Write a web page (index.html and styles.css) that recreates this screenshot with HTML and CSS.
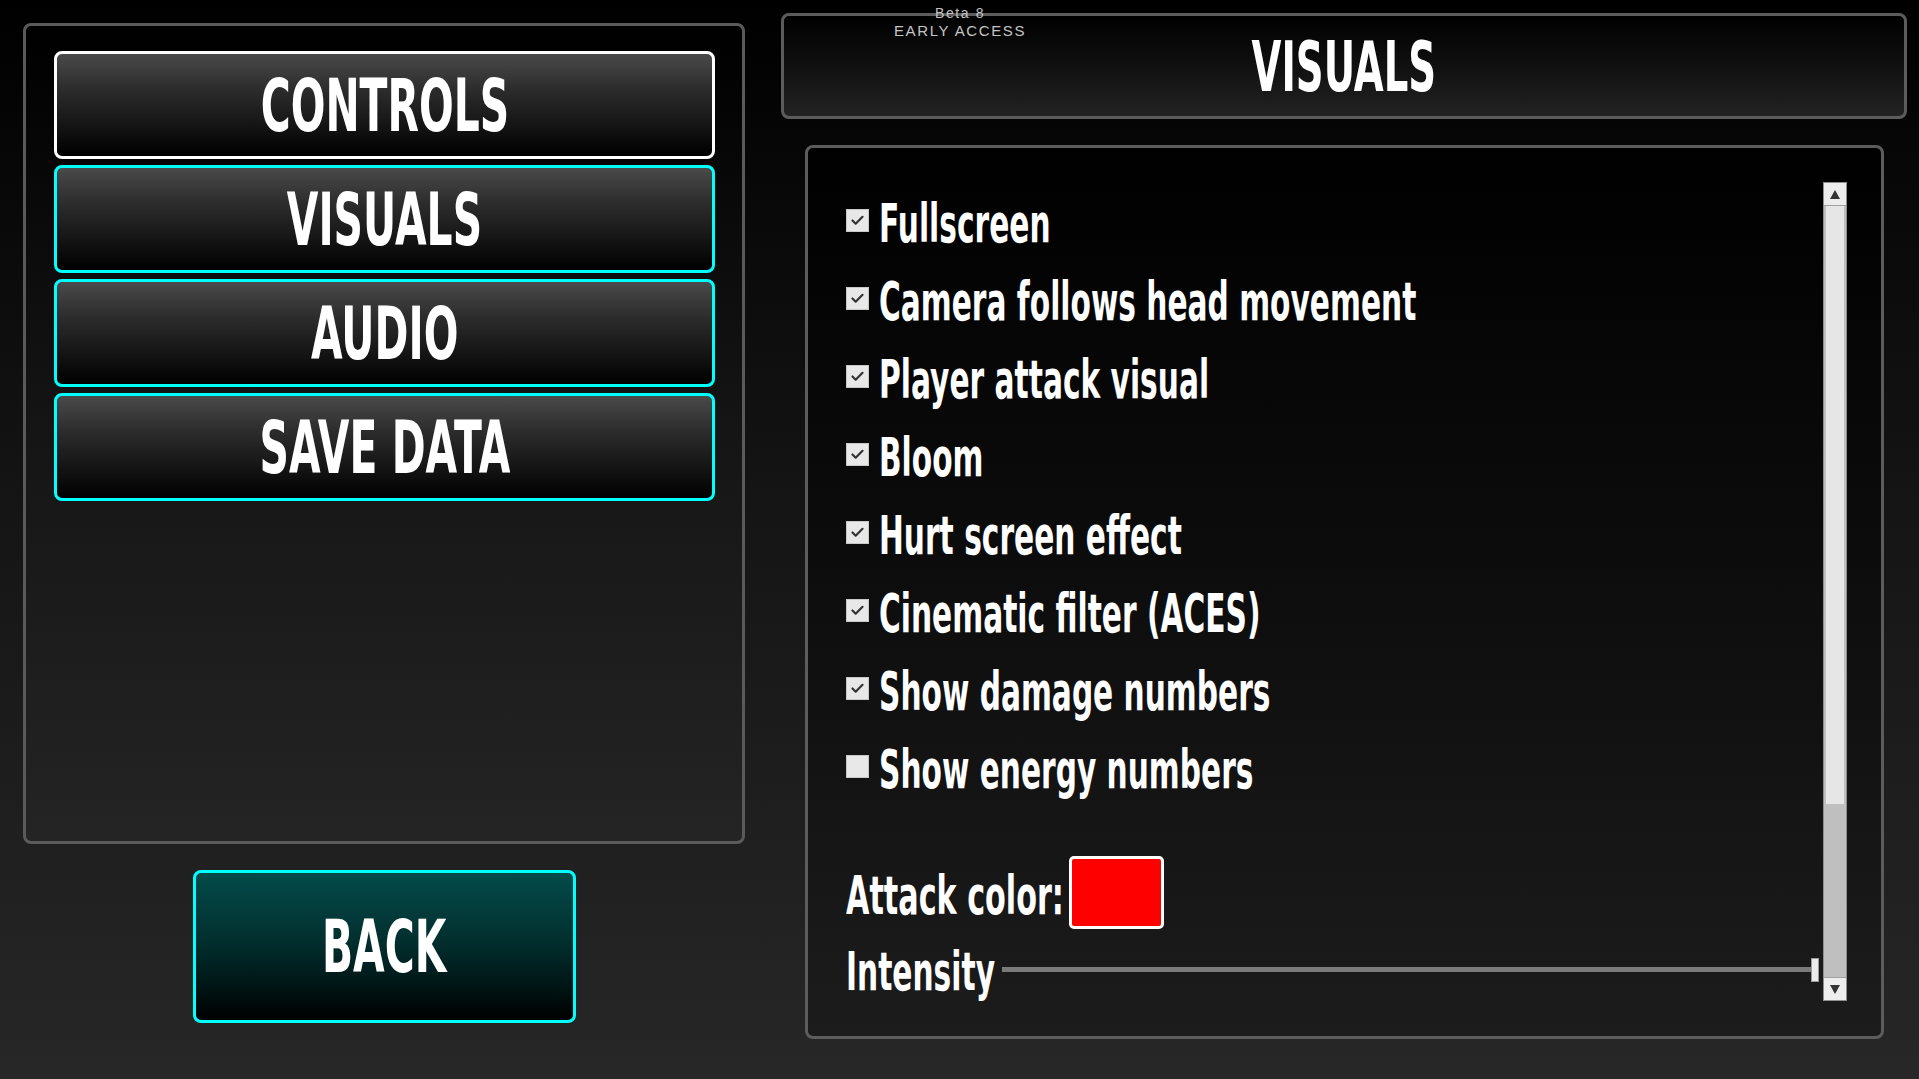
FILE: index.html
```html
<!DOCTYPE html>
<html lang="en">
<head>
    <meta charset="UTF-8">
    <meta name="viewport" content="width=device-width, initial-scale=1.0">
    <title>Settings - Visuals</title>
    <link rel="stylesheet" href="styles.css">
</head>
<body>
    <!-- 左侧菜单 -->
    <div class="side">
        <div class="menu-panel">
            <button class="menu-btn selected"><span class="squish">CONTROLS</span></button>
            <button class="menu-btn"><span class="squish">VISUALS</span></button>
            <button class="menu-btn"><span class="squish">AUDIO</span></button>
            <button class="menu-btn"><span class="squish">SAVE DATA</span></button>
        </div>
        <button class="back-btn"><span class="squish">BACK</span></button>
    </div>

    <!-- 右侧设置 -->
    <div class="main">
        <div class="beta">
            <div class="beta-ver">Beta 8</div>
            <div class="beta-label">EARLY ACCESS</div>
        </div>

        <div class="title-bar">
            <h1 class="squish">VISUALS</h1>
        </div>

        <div class="settings-panel">
            <div class="settings">
                <div class="row">
                    <span class="check on"><svg viewBox="0 0 23 23"><polyline points="6,11.5 9.5,15 17,7.5"/></svg></span>
                    <span class="label">Fullscreen</span>
                </div>
                <div class="row">
                    <span class="check on"><svg viewBox="0 0 23 23"><polyline points="6,11.5 9.5,15 17,7.5"/></svg></span>
                    <span class="label">Camera follows head movement</span>
                </div>
                <div class="row">
                    <span class="check on"><svg viewBox="0 0 23 23"><polyline points="6,11.5 9.5,15 17,7.5"/></svg></span>
                    <span class="label">Player attack visual</span>
                </div>
                <div class="row">
                    <span class="check on"><svg viewBox="0 0 23 23"><polyline points="6,11.5 9.5,15 17,7.5"/></svg></span>
                    <span class="label">Bloom</span>
                </div>
                <div class="row">
                    <span class="check on"><svg viewBox="0 0 23 23"><polyline points="6,11.5 9.5,15 17,7.5"/></svg></span>
                    <span class="label">Hurt screen effect</span>
                </div>
                <div class="row">
                    <span class="check on"><svg viewBox="0 0 23 23"><polyline points="6,11.5 9.5,15 17,7.5"/></svg></span>
                    <span class="label">Cinematic filter (ACES)</span>
                </div>
                <div class="row">
                    <span class="check on"><svg viewBox="0 0 23 23"><polyline points="6,11.5 9.5,15 17,7.5"/></svg></span>
                    <span class="label">Show damage numbers</span>
                </div>
                <div class="row">
                    <span class="check"></span>
                    <span class="label">Show energy numbers</span>
                </div>

                <div class="color-row">
                    <div class="color-label"><span class="label">Attack color:</span></div>
                    <div class="swatch"></div>
                </div>

                <div class="slider-row">
                    <div class="slider-label"><span class="label">Intensity</span></div>
                    <div class="slider">
                        <div class="track"></div>
                        <div class="handle"></div>
                    </div>
                </div>
            </div>

            <div class="scrollbar">
                <div class="sb-btn"><span class="arrow-up"></span></div>
                <div class="sb-track">
                    <div class="sb-thumb"></div>
                </div>
                <div class="sb-btn"><span class="arrow-down"></span></div>
            </div>
        </div>
    </div>
</body>
</html>
```

FILE: styles.css
```css
* {
    margin: 0;
    padding: 0;
    box-sizing: border-box;
}

html, body {
    width: 1919px;
    height: 1079px;
    overflow: hidden;
}

body {
    background: linear-gradient(180deg, #000 0%, #141414 45%, #272727 100%);
    font-family: "DejaVu Sans", "Liberation Sans", sans-serif;
    color: #fff;
    display: flex;
    align-items: flex-start;
    gap: 36px;
    padding: 13px 0 0 23px;
}

/* 压窄的粗体字 */
.squish {
    display: inline-block;
    font-weight: bold;
    transform: scaleX(0.56);
    white-space: nowrap;
}

/* 左侧 */
.side {
    width: 722px;
    flex: none;
    padding-top: 10px;
    display: flex;
    flex-direction: column;
    align-items: center;
}

.menu-panel {
    width: 100%;
    height: 821px;
    border: 3px solid #5a5a5a;
    border-radius: 8px;
    background: linear-gradient(180deg, #000 0%, #151515 50%, #242424 100%);
    padding: 25px 27px 0 28px;
    display: flex;
    flex-direction: column;
    gap: 6px;
}

.menu-btn {
    height: 108px;
    width: 100%;
    border: 3px solid #00ffff;
    border-radius: 8px;
    background: linear-gradient(180deg, #4a4a4a 0%, #2c2c2c 35%, #181818 65%, #000 100%);
    color: #fff;
    display: flex;
    justify-content: center;
    align-items: center;
    font-family: "DejaVu Sans", sans-serif;
    font-size: 73px;
    line-height: 1;
    cursor: pointer;
}

.menu-btn.selected {
    border-color: #fff;
}

.back-btn {
    margin-top: 26px;
    width: 383px;
    height: 153px;
    border: 3px solid #00ffff;
    border-radius: 8px;
    background: linear-gradient(180deg, #044b4b 0%, #02302f 45%, #001717 75%, #000 100%);
    color: #fff;
    display: flex;
    justify-content: center;
    align-items: center;
    font-family: "DejaVu Sans", sans-serif;
    font-size: 73px;
    line-height: 1;
    cursor: pointer;
}

/* 右侧 */
.main {
    width: 1126px;
    flex: none;
    display: flex;
    flex-direction: column;
    align-items: center;
    position: relative;
}

.beta {
    position: absolute;
    top: -8px;
    left: 79px;
    width: 200px;
    text-align: center;
    font-family: "Liberation Sans", Arial, sans-serif;
    color: #c4c4c4;
    letter-spacing: 1.6px;
    z-index: 2;
}

.beta-ver {
    font-size: 14px;
    line-height: 16px;
}

.beta-label {
    font-size: 15px;
    line-height: 17px;
    margin-top: 1px;
}

.title-bar {
    width: 100%;
    height: 106px;
    border: 3px solid #5c5c5c;
    border-radius: 8px;
    background: linear-gradient(180deg, #000 0%, #101010 50%, #232323 100%);
    display: flex;
    justify-content: center;
    align-items: center;
}

.title-bar h1 {
    font-size: 69px;
    line-height: 1;
    margin-top: 2px;
}

.settings-panel {
    margin-top: 26px;
    width: 1079px;
    height: 894px;
    border: 3px solid #5c5c5c;
    border-radius: 8px;
    background: linear-gradient(180deg, #000 0%, #0c0c0c 45%, #1c1c1c 100%);
    padding: 34px 34px 35px 38px;
    display: flex;
    gap: 4px;
}

.settings {
    flex: 1;
    min-width: 0;
    padding-top: 3px;
    display: flex;
    flex-direction: column;
}

.row {
    display: flex;
    align-items: flex-start;
    height: 78px;
}

.check {
    flex: none;
    width: 23px;
    height: 23px;
    margin-top: 24px;
    margin-right: 10px;
    background: #e8e8e8;
    border: 1px solid #c8c8c8;
}

.check svg {
    display: block;
    width: 100%;
    height: 100%;
}

.check polyline {
    fill: none;
    stroke: #333;
    stroke-width: 2.4;
    stroke-linecap: round;
    stroke-linejoin: round;
}

.label {
    display: inline-block;
    font-size: 53px;
    line-height: 78px;
    font-weight: bold;
    white-space: nowrap;
    transform: scaleX(0.56);
    transform-origin: left center;
}

.color-row {
    margin-top: 47px;
    display: flex;
    align-items: flex-start;
}

.color-label {
    width: 214px;
    margin-right: 9px;
    margin-top: 3px;
    height: 73px;
}

.color-label .label {
    line-height: 73px;
    transform: scaleX(0.57);
}

.swatch {
    width: 95px;
    height: 73px;
    background: #ff0000;
    border: 3px solid #fff;
    border-radius: 5px;
}

.slider-row {
    margin-top: 1px;
    height: 78px;
    display: flex;
    align-items: center;
}

.slider-label {
    width: 150px;
    margin-right: 6px;
    height: 78px;
}

.slider {
    flex: 1;
    display: flex;
    align-items: center;
    margin-bottom: 5px;
}

.track {
    flex: 1;
    height: 5px;
    background: #7a7a7a;
}

.handle {
    width: 8px;
    height: 24px;
    background: #ececec;
    border: 1px solid #9a9a9a;
}

/* 滚动条 */
.scrollbar {
    flex: none;
    width: 24px;
    display: flex;
    flex-direction: column;
    border: 1px solid #8e8e8e;
}

.sb-btn {
    flex: none;
    height: 23px;
    background: #ededed;
    display: flex;
    justify-content: center;
    align-items: center;
}

.sb-btn:first-child {
    border-bottom: 1px solid #a0a0a0;
}

.sb-btn:last-child {
    border-top: 1px solid #a0a0a0;
}

.arrow-up {
    width: 0;
    height: 0;
    border-left: 5px solid transparent;
    border-right: 5px solid transparent;
    border-bottom: 9px solid #333;
}

.arrow-down {
    width: 0;
    height: 0;
    border-left: 5px solid transparent;
    border-right: 5px solid transparent;
    border-top: 9px solid #333;
}

.sb-track {
    flex: 1;
    background: #bfbfbf;
}

.sb-thumb {
    height: 598px;
    margin: 0 2px;
    background: #e6e6e6;
}
```
